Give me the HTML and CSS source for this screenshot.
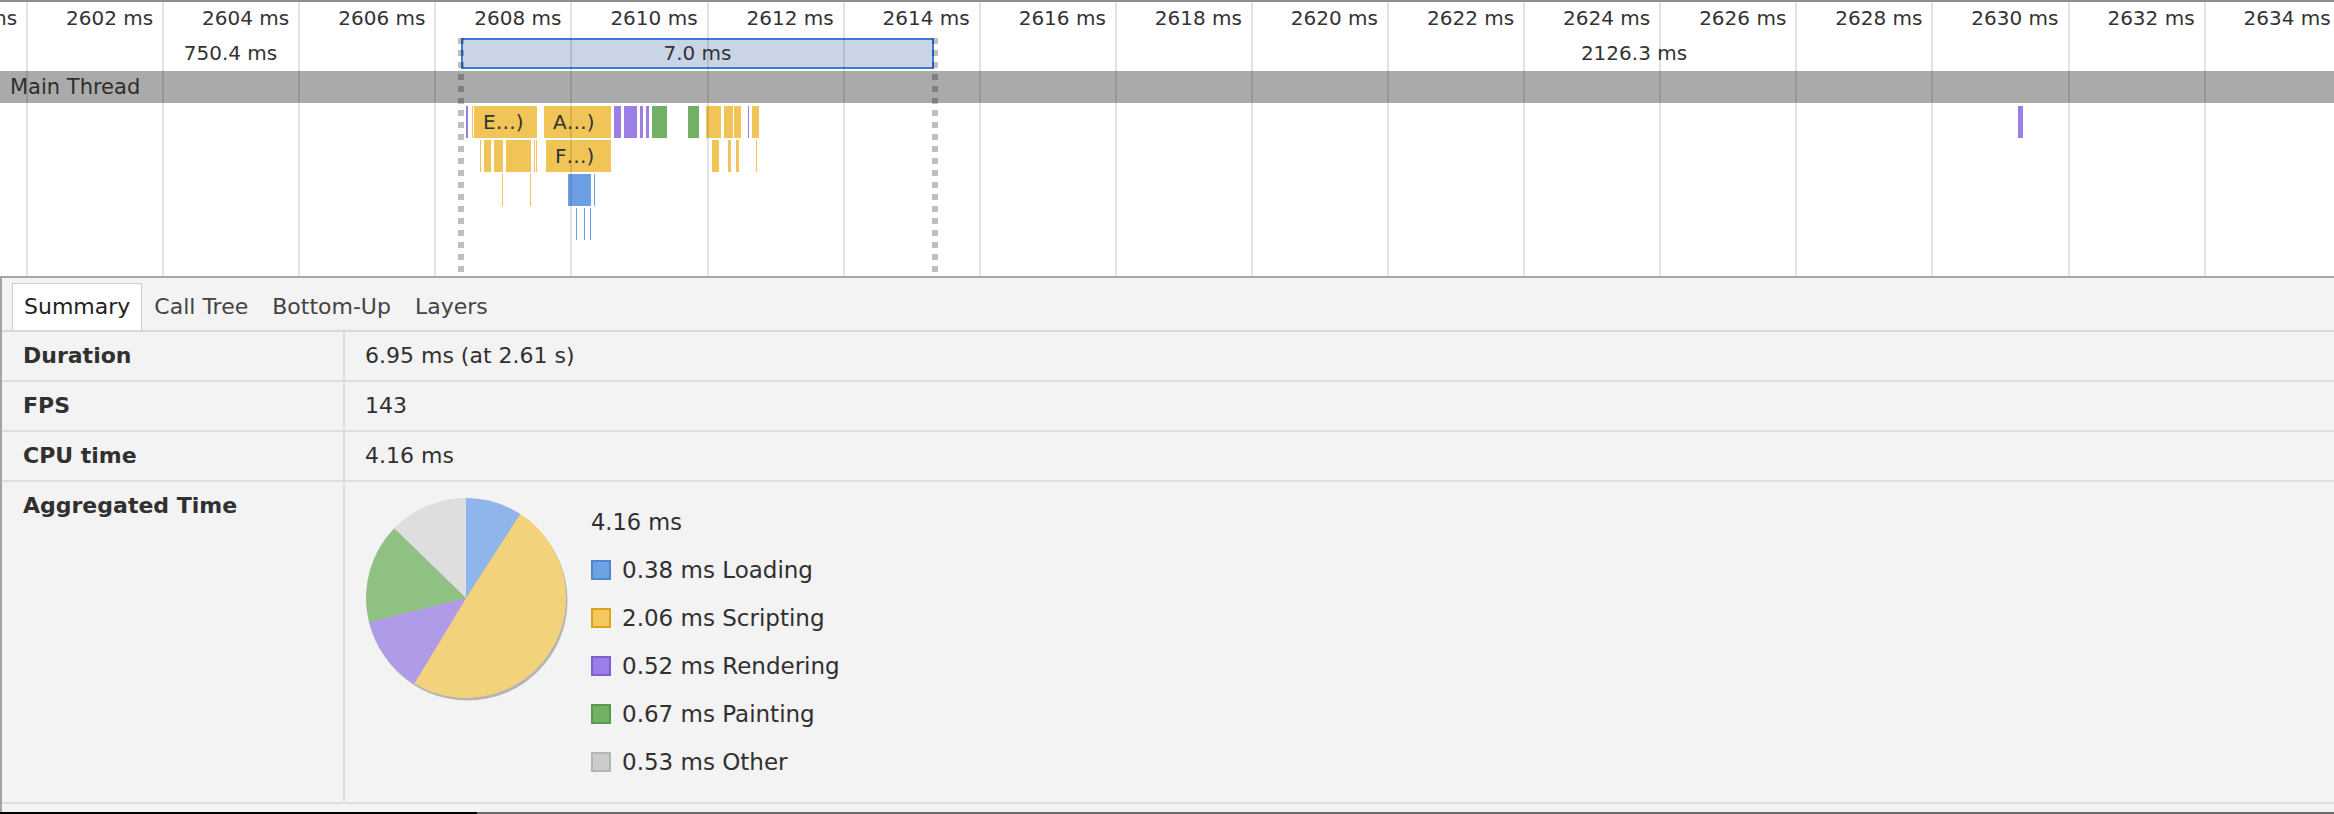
FILE: index.html
```html
<!DOCTYPE html>
<html>
<head>
    <title>Timeline - Summary</title>
    <link rel="stylesheet" href="styles.css">
</head>
<body>
    <div class="timeline">
        <div class="ruler">
            <span>2600 ms</span><span>2602 ms</span><span>2604 ms</span><span>2606 ms</span>
            <span>2608 ms</span><span>2610 ms</span><span>2612 ms</span><span>2614 ms</span>
            <span>2616 ms</span><span>2618 ms</span><span>2620 ms</span><span>2622 ms</span>
            <span>2624 ms</span><span>2626 ms</span><span>2628 ms</span><span>2630 ms</span>
            <span>2632 ms</span><span>2634 ms</span>
        </div>
        <div class="ranges">
            <div class="range before">750.4 ms</div>
            <div class="range selection">7.0 ms</div>
            <div class="range after">2126.3 ms</div>
        </div>
        <div class="thread">Main Thread</div>
        <div class="flame" id="flame"></div>
        <div class="grid"></div>
        <div class="marker marker-left"></div>
        <div class="marker marker-right"></div>
    </div>

    <div class="panel">
        <div class="tabs">
            <div class="tab active">Summary</div>
            <div class="tab">Call Tree</div>
            <div class="tab">Bottom-Up</div>
            <div class="tab">Layers</div>
        </div>
        <div class="details">
            <div class="key">Duration</div>
            <div class="val">6.95 ms (at 2.61 s)</div>
            <div class="key">FPS</div>
            <div class="val">143</div>
            <div class="key">CPU time</div>
            <div class="val">4.16 ms</div>
            <div class="key tall">Aggregated Time</div>
            <div class="val tall agg">
                <svg class="pie" width="204" height="204" viewBox="0 0 204 204">
                    <circle cx="101.5" cy="102.5" r="100" fill="#b4b4b4"/>
                    <path d="M100 100 L100 0 A100 100 0 0 1 154.29 16.02 Z" fill="#8fb6ea"/>
                    <path d="M100 100 L154.29 16.02 A100 100 0 0 1 48.27 185.58 Z" fill="#f2d27b"/>
                    <path d="M100 100 L48.27 185.58 A100 100 0 0 1 2.91 123.94 Z" fill="#b09be9"/>
                    <path d="M100 100 L2.91 123.94 A100 100 0 0 1 28.22 30.37 Z" fill="#8fc182"/>
                    <path d="M100 100 L28.22 30.37 A100 100 0 0 1 100 0 Z" fill="#dedede"/>
                </svg>
                <div class="legend">
                    <div class="total">4.16 ms</div>
                    <div class="item"><span class="swatch loading"></span>0.38 ms Loading</div>
                    <div class="item"><span class="swatch scripting"></span>2.06 ms Scripting</div>
                    <div class="item"><span class="swatch rendering"></span>0.52 ms Rendering</div>
                    <div class="item"><span class="swatch painting"></span>0.67 ms Painting</div>
                    <div class="item"><span class="swatch other"></span>0.53 ms Other</div>
                </div>
            </div>
        </div>
    </div>
    <div class="statusbar"></div>

    <script>
        // [row, left, width, kind, label]
        var events = [
            [0, 466, 1.5, 'render'], [0, 472, 1, 'script'], [0, 474, 63, 'script', 'E…)'],
            [0, 544, 67, 'script', 'A…)'], [0, 614, 7, 'render'], [0, 624, 13, 'render'],
            [0, 640, 3, 'render'], [0, 646, 3, 'render'], [0, 652, 15, 'paint'],
            [0, 688, 11, 'paint'], [0, 706, 15, 'script'], [0, 724, 9, 'script'],
            [0, 734, 7, 'script'], [0, 748, 1, 'render'], [0, 752, 7, 'script'],
            [0, 2018, 1.5, 'render'], [0, 2020, 3, 'render'],
            [1, 480, 1, 'script'], [1, 484, 7, 'script'], [1, 494, 9, 'script'],
            [1, 506, 25, 'script'], [1, 534, 1, 'script'], [1, 536, 1, 'script'],
            [1, 546, 65, 'script', 'F…)'], [1, 712, 7, 'script'], [1, 728, 3, 'script'],
            [1, 736, 3, 'script'], [1, 756, 1, 'script'],
            [2, 502, 1, 'script'], [2, 530, 1, 'script'], [2, 568, 23, 'load'], [2, 594, 1, 'load'],
            [3, 576, 1, 'load'], [3, 584, 1, 'load'], [3, 590, 1, 'load']
        ];

        var flame = document.getElementById('flame');
        for (var i = 0; i < events.length; i++) {
            var e = events[i];
            var el = document.createElement('div');
            el.className = 'ev ' + e[3];
            el.style.top = (3 + e[0] * 34) + 'px';
            el.style.left = e[1] + 'px';
            el.style.width = e[2] + 'px';
            if (e[4]) {
                el.className += ' named';
                el.textContent = e[4];
            }
            flame.appendChild(el);
        }
    </script>
</body>
</html>
```

FILE: styles.css
```css
body { margin: 0; width: 2334px; height: 814px; overflow: hidden; background: #fff; font-family: "DejaVu Sans", sans-serif; color: #333; }

.timeline { position: relative; height: 274px; border-top: 2px solid #8e8e8e; border-bottom: 2px solid #a6a6a6; overflow: hidden; }
.ruler { display: flex; height: 36px; margin-left: -109px; font-size: 20px; line-height: 32px; }
.ruler span { flex: none; width: 136.1px; box-sizing: border-box; padding-right: 10px; text-align: right; white-space: nowrap; }

.ranges { display: flex; height: 31px; font-size: 20px; line-height: 31px; }
.range { text-align: center; white-space: nowrap; }
.before { width: 461px; }
.selection { width: 473px; box-sizing: border-box; border: 2px solid #3b7bd9; line-height: 27px; background: rgba(60, 100, 170, 0.28); }
.after { flex: 1; }

.thread { height: 32px; margin-top: 2px; background: #aaa; font-size: 21px; line-height: 32px; padding-left: 10px; color: #2e2e2e; }

.flame { position: relative; height: 173px; }
.ev { position: absolute; height: 32px; box-sizing: border-box; font-size: 20px; line-height: 32px; white-space: nowrap; overflow: hidden; color: #333; }
.ev.named { padding-left: 9px; }
.ev.script { background: #f0c457; }
.ev.render { background: #9b7fe6; }
.ev.paint { background: #72b066; }
.ev.load { background: #6b9ee2; }

.grid { position: absolute; left: 0; right: 0; top: 0; bottom: 0; pointer-events: none;
    background: repeating-linear-gradient(to right, transparent 0 26px, rgba(0, 0, 0, 0.11) 26px 28px, transparent 28px 136.1px); }
.marker { position: absolute; top: 36px; bottom: 0; width: 6px;
    background: repeating-linear-gradient(to bottom, rgba(0, 0, 0, 0.25) 0 6px, transparent 6px 12px); }
.marker-left { left: 458px; }
.marker-right { left: 932px; }

.panel { height: 534px; background: #f3f3f3; border-left: 2px solid #a3a3a3; }
.tabs { display: flex; height: 47px; padding: 5px 0 0 10px; border-bottom: 2px solid #d8d8d8; font-size: 22px; }
.tab { padding: 0 11px; line-height: 45px; border: 1px solid transparent; border-bottom: none; color: #444; white-space: nowrap; }
.tab.active { background: #fff; border-color: #cdcdcd; color: #222; }

.details { display: grid; grid-template-columns: 343px 1fr; font-size: 22px; }
.key, .val { height: 48px; line-height: 48px; border-bottom: 2px solid #dedede; }
.key { padding-left: 21px; border-right: 2px solid #dedede; font-weight: bold; color: #303030; }
.val { padding-left: 20px; color: #303030; }
.tall { height: 320px; }
.agg { display: flex; align-items: flex-start; padding-top: 16px; height: 304px; line-height: normal; }
.pie { display: block; margin-left: 1px; flex: none; }
.legend { margin-left: 21px; font-size: 23px; line-height: 48px; color: #303030; }
.legend .total { font-size: 22.5px; }
.item { display: flex; align-items: center; white-space: nowrap; }
.swatch { width: 20px; height: 20px; box-sizing: border-box; border: 2px solid; margin-right: 11px; }
.loading { background: #6fa2e3; border-color: #4f86d4; }
.scripting { background: #f3c85e; border-color: #dca11f; }
.rendering { background: #9c7fe6; border-color: #7d5fd2; }
.painting { background: #72b266; border-color: #559a49; }
.other { background: #cbcbcb; border-color: #b5b5b5; }

.statusbar { height: 2px; background: linear-gradient(to right, #000 0 477px, #6a6a6a 477px); }
```
